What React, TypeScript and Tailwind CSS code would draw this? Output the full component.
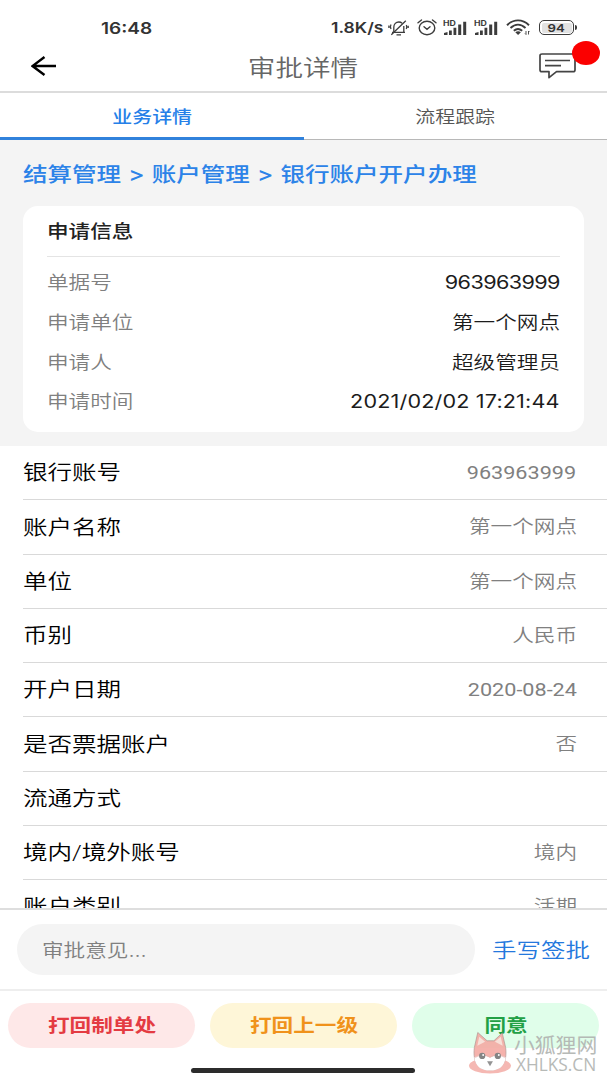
import type { ReactNode } from "react";

type Entry = { label: string; value: string; digits?: string };

const applicationInfo: Entry[] = [
  { label: "单据号", value: "963963999", digits: "font-normal tracking-[-0.5px] -mr-[-0.5px]" },
  { label: "申请单位", value: "第一个网点" },
  { label: "申请人", value: "超级管理员" },
  { label: "申请时间", value: "2021/02/02 17:21:44", digits: "font-normal tracking-[0.13px]" },
];

const details: Entry[] = [
  { label: "银行账号", value: "963963999", digits: "font-normal" },
  { label: "账户名称", value: "第一个网点" },
  { label: "单位", value: "第一个网点" },
  { label: "币别", value: "人民币" },
  { label: "开户日期", value: "2020-08-24", digits: "font-normal" },
  { label: "是否票据账户", value: "否" },
  { label: "流通方式", value: "" },
  { label: "境内/境外账号", value: "境内" },
  { label: "账户类别", value: "活期" },
];

function Wide({ className = "", children }: { className?: string; children: ReactNode }) {
  return <span className={`inline-block whitespace-nowrap scale-x-[1.2] ${className}`}>{children}</span>;
}

function BellOff() {
  return (
    <svg className="h-[16px] w-[21px]" viewBox="0 0 21 16" fill="none" stroke="#3c3c3c" strokeWidth="1.3">
      <path d="M4 12.300h13M5.800 12V7.200C5.800 4 8 2 10.800 2c1.300 0 2.500.5 3.300 1.300M15.800 6v6M8.500 14.800h4.500" />
      <path d="M17.800.8 3.300 14.800M3 4.500c-.8 1.500-.8 3 0 4.500M.9 5.500v2.500M18.300 5c.7 1.300.7 2.500 0 4M20.200 5.800v2.200" />
    </svg>
  );
}

function Alarm() {
  return (
    <svg className="h-[17px] w-[20px]" viewBox="0 0 20 17" fill="none" stroke="#3c3c3c" strokeWidth="1.4" strokeLinecap="round">
      <ellipse cx="10" cy="9" rx="7.800" ry="6.800" />
      <path d="m7 7.800 3 2.500 3-2.500M1 3.800 4.500 1M19 3.800 15.500 1" />
    </svg>
  );
}

function Signal() {
  return (
    <svg className="h-[16px] w-[24px]" viewBox="0 0 24 16">
      <g transform="scale(1.25 1)">
        <text x="0" y="6" fontSize="7" fontWeight="700" fontFamily="Inter, sans-serif" fill="#3c3c3c">
          HD
        </text>
      </g>
      <path d="M1 15v-2l3.500-1v3zM6 15v-4.500h2.800V15zM10.500 15V7.700h2.800V15zM15.200 15V4.500h3V15zM20.200 15V1.800h3V15z" fill="#3c3c3c" />
    </svg>
  );
}

function Wifi() {
  return (
    <svg className="h-[17px] w-[25px]" viewBox="0 0 25 17" fill="none" stroke="#3c3c3c" strokeWidth="1.900">
      <path d="M1 6.200C7.500-.2 16.500-.2 23 6.200M4.500 9c4.700-4.400 10.300-4.400 15 0M7.800 11.800c2.800-2.500 5.600-2.500 8.400 0" />
      <path d="M9.300 13.200c1.800-1.300 3.800-1.300 5.600 0l-2.800 2.800z" fill="#3c3c3c" stroke="none" />
      <path d="M20 12v3.500l-1-1M22.500 15.500V12l1 1" strokeWidth=".9" />
    </svg>
  );
}

function Battery() {
  return (
    <div className="flex items-center">
      <div className="flex h-[15px] w-[35px] items-center justify-center rounded-[5px] border-[1.5px] border-[#3c3c3c] p-[1.500px]">
        <div className="flex h-full w-full items-center justify-center rounded-[2px] bg-[#e2e2e2] pt-[1px] text-[11px] font-semibold leading-none text-[#333]">
          <span className="scale-x-[1.2]">94</span>
        </div>
      </div>
      <div className="ml-[1px] h-[5px] w-[2px] rounded-r bg-[#3c3c3c]" />
    </div>
  );
}

function StatusBar() {
  return (
    <div className="flex h-[40px] items-center pt-[15px] pl-[101px] text-[#333]">
      <span className="w-[230px] text-[16px] font-semibold">
        <span className="inline-block origin-left scale-x-[1.190]">16:48</span>
      </span>
      <span className="w-[57px] pt-[1px] text-[15px] font-semibold">
        <span className="inline-block origin-left scale-x-[1.170]">1.8K/s</span>
      </span>
      <BellOff />
      <div className="ml-[8px]"><Alarm /></div>
      <div className="ml-[6px]"><Signal /></div>
      <div className="ml-[7px]"><Signal /></div>
      <div className="ml-[8px]"><Wifi /></div>
      <div className="ml-[8px]"><Battery /></div>
    </div>
  );
}

function Header() {
  return (
    <div className="grid h-[51px] grid-cols-3 items-center">
      <svg className="ml-[31px] h-[20px] w-[26px]" viewBox="0 0 26 20" fill="none" stroke="#000" strokeWidth="2.400">
        <path d="M25 10H2M13.500 1 1.500 10l12 9" />
      </svg>
      <h1 className="pt-[4px] text-center text-[23px] font-[350] leading-[30px] text-[#666]">
        <Wide>审批详情</Wide>
      </h1>
      <div className="relative mr-[31px] justify-self-end">
        <svg className="h-[26px] w-[37px]" viewBox="0 0 37 26" fill="none" stroke="#444" strokeWidth="1.700" strokeLinejoin="round">
          <path d="M3 1h31c1.200 0 2 .7 2 1.700V17c0 1-.8 1.700-2 1.700H17.500L10 24.700v-6H3c-1.200 0-2-.7-2-1.700V2.700C1 1.700 1.800 1 3 1z" />
          <path d="M6 7.500h25M6 12.700h16" />
        </svg>
        <div className="absolute -top-[12px] left-[33px] h-[24px] w-[28px] rounded-[50%] bg-[#fb0000]" />
      </div>
    </div>
  );
}

function Tabs() {
  return (
    <div className="flex h-[49px] border-t-2 border-[#dcdcdc] text-[16.600px]">
      <div className="flex flex-1 items-center justify-center border-b-[3px] border-[#3182dc] pt-[5px] font-medium text-[#2680e8]">
        <Wide>业务详情</Wide>
      </div>
      <div className="flex flex-1 items-center justify-center border-b border-[#b8b8b8] pt-[3px] font-[350] text-[#555]">
        <Wide>流程跟踪</Wide>
      </div>
    </div>
  );
}

function InfoCard() {
  return (
    <section className="h-[306px] bg-[#f4f4f4] px-[23px] pt-[20px]">
      <div className="h-[46px] text-[20.450px] font-medium leading-[30px] text-[#2c83e8] [word-spacing:0.5px]">
        <Wide className="origin-left">结算管理 &gt; 账户管理 &gt; 银行账户开户办理</Wide>
      </div>
      <div className="h-[226px] w-[561px] rounded-[15px] bg-white px-[24px]">
        <h2 className="mb-[6px] h-[51px] border-b border-[#e4e4e4] text-[18px] font-medium leading-[52px] text-[#222]">
          <Wide className="origin-left">申请信息</Wide>
        </h2>
        {applicationInfo.map((item) => (
          <div key={item.label} className="flex h-[39.700px] items-center justify-between text-[18px]">
            <Wide className="origin-left font-[350] text-[#808080]">{item.label}</Wide>
            <Wide className={`origin-right text-[#1c1c1c] ${item.digits ?? "font-[350]"}`}>{item.value}</Wide>
          </div>
        ))}
      </div>
    </section>
  );
}

function DetailList() {
  return (
    <section className="h-[462px] overflow-hidden pl-[23px]">
      {details.map((item) => (
        <div
          key={item.label}
          className="flex h-[54.250px] items-center justify-between border-b border-[#d9d9d9] pr-[30.500px] font-['Roboto','Noto_Sans_CJK_SC',sans-serif]"
        >
          <Wide className="origin-left pt-[2px] text-[20.450px] font-[350] text-black">{item.label}</Wide>
          <Wide className={`origin-right text-[18px] text-[#808080] ${item.digits ?? "font-[350]"}`}>{item.value}</Wide>
        </div>
      ))}
    </section>
  );
}

function Watermark() {
  return (
    <div className="absolute right-[9px] bottom-[5px] flex items-end opacity-90">
      <svg className="h-[44px] w-[44px]" viewBox="0 0 44 45">
        <ellipse cx="22" cy="35.500" rx="21.500" ry="8" fill="#f5b1ab" />
        <path d="M6 17 9.500 1.500 19 10h7L34.500 2 38 17c2 16-5 23-16 23S4 33 6 17z" fill="#f4aaa4" stroke="#a88b88" strokeWidth=".7" />
        <path d="M9 15 11 6l6 5zM35 15 33 6l-6 5z" fill="#faded8" />
        <path d="M6 27c5-3 10-3 16 0 6-3 11-3 16 0-1 9-7 13.500-16 13.500S7 36 6 27z" fill="#fff" />
        <path d="M7 27c5-3 10-3 15 0 5-3 10-3 15 0" fill="none" stroke="#dfa6a2" strokeWidth=".8" />
        <circle cx="14" cy="25.500" r="3.200" fill="#777" />
        <circle cx="30" cy="25.500" r="3.200" fill="#777" />
        <circle cx="15" cy="24.500" r="1" fill="#fff" />
        <circle cx="31" cy="24.500" r="1" fill="#fff" />
        <path d="M19 31h6l-3 5z" fill="#888" />
      </svg>
      <div className="mb-[1px] ml-[2px] w-[84px] font-['Open_Sans','Noto_Sans_CJK_SC',sans-serif] text-[#b0b3b0]">
        <div className="text-[20.800px] leading-[20px] whitespace-nowrap">小狐狸网</div>
        <div className="origin-left scale-x-[0.960] pl-[2px] text-[18px] leading-[19px] whitespace-nowrap">XHLKS.CN</div>
      </div>
    </div>
  );
}

function Footer() {
  return (
    <footer className="relative">
      <div className="flex h-[81px] items-center border-t-2 border-[#dedede] pl-[17px]">
        <div className="flex h-[51px] w-[458px] items-center rounded-full bg-[#f4f4f4] pt-[2px] pl-[25px] text-[18px] font-[350] text-[#808080]">
          <Wide className="origin-left">审批意见...</Wide>
        </div>
        <div className="ml-[17px] pt-[4px] text-[20.400px] font-[350] text-[#2478dd]">
          <Wide className="origin-left">手写签批</Wide>
        </div>
      </div>
      <div className="flex gap-[15px] border-t-2 border-[#eeeeee] px-[8px] pt-[12px] text-[18px] font-bold">
        <button className="h-[45px] flex-1 rounded-full bg-[#fee8e8] text-[#e43b42]"><Wide>打回制单处</Wide></button>
        <button className="h-[45px] flex-1 rounded-full bg-[#fef6d8] text-[#f0921b]"><Wide>打回上一级</Wide></button>
        <button className="h-[45px] flex-1 rounded-full bg-[#e0feea] text-[#22a045]"><Wide>同意</Wide></button>
      </div>
      <div className="mt-[20px] mb-[7px] ml-[191px] h-[5px] w-[224px] rounded-full bg-[#2c2c2c]" />
      <Watermark />
    </footer>
  );
}

export default function App() {
  return (
    <main className="flex h-[1080px] w-[607px] flex-col overflow-hidden bg-white font-['Inter','Noto_Sans_CJK_SC',sans-serif]">
      <StatusBar />
      <Header />
      <Tabs />
      <InfoCard />
      <DetailList />
      <Footer />
    </main>
  );
}
